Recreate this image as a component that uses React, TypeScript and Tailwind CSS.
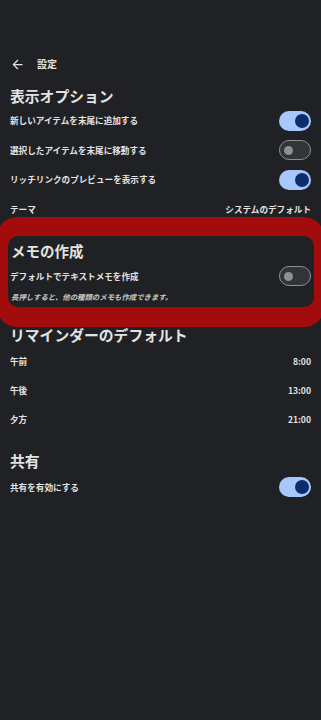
import type { ReactNode } from "react";

const font = { fontFamily: '"Noto Sans CJK JP", "Noto Sans", sans-serif' };

function Toggle({ on }: { on: boolean }) {
  if (on) {
    return (
      <div className="flex h-[20px] w-[32px] shrink-0 items-center justify-end rounded-full bg-[#a8c7fa] pr-[2.5px]">
        <div className="size-[14px] rounded-full bg-[#0b2d6b]" />
      </div>
    );
  }
  return (
    <div className="flex h-[20px] w-[32px] shrink-0 items-center rounded-full border-[1.5px] border-[#8e918f] bg-[#333437] pl-[4px]">
      <div className="size-[9px] rounded-full bg-[#8e918f]" />
    </div>
  );
}

function Row({ label, right, h = "h-[29.5px]" }: { label: string; right?: ReactNode; h?: string }) {
  return (
    <div className={`flex ${h} items-center justify-between px-[10px]`}>
      <span className="text-[8.6px] font-bold leading-none text-[#e3e3e3]">{label}</span>
      {typeof right === "string" ? (
        <span className="text-[8.6px] font-bold leading-none text-[#e3e3e3]">{right}</span>
      ) : (
        right
      )}
    </div>
  );
}

function Heading({ children, className = "" }: { children: ReactNode; className?: string }) {
  return (
    <div className={`flex h-[20px] items-center px-[10px] ${className}`}>
      <h2 className="text-[14.8px] font-bold leading-none text-[#e3e3e3]">{children}</h2>
    </div>
  );
}

export default function App() {
  return (
    <div className="min-h-[720px] w-[321px] overflow-hidden bg-[#202124] pt-[52px]" style={font}>
      <div className="flex h-[24px] items-center">
        <svg viewBox="0 0 24 24" className="ml-[9.5px] size-[15px] fill-[#e3e3e3]">
          <path d="M20 11H7.83l5.59-5.59L12 4l-8 8 8 8 1.41-1.41L7.83 13H20v-2z" />
        </svg>
        <span className="ml-[12.5px] text-[10px] font-bold leading-none text-[#e3e3e3]">設定</span>
      </div>

      <Heading className="mt-[10px]">表示オプション</Heading>
      <Row label="新しいアイテムを末尾に追加する" right={<Toggle on />} />
      <Row label="選択したアイテムを末尾に移動する" right={<Toggle on={false} />} />
      <Row label="リッチリンクのプレビューを表示する" right={<Toggle on />} />
      <Row label="テーマ" right="システムのデフォルト" />

      <div className="relative -ml-[3px] -mt-[7px] w-[327px] rounded-[20px] bg-[#a30c0c] pb-[20px] pl-[11px] pr-[10px] pt-[19px]">
        <div className="rounded-[10px] bg-[#202124] pb-[4px] pt-[5px]">
          <div className="flex h-[20px] items-center px-[3px]">
            <h2 className="text-[14.5px] font-bold leading-none text-[#e3e3e3]">メモの作成</h2>
          </div>
          <div className="mt-[5px] flex h-[20px] items-center justify-between pl-[2px] pr-[3px]">
            <span className="text-[8.6px] font-bold leading-none text-[#e3e3e3]">デフォルトでテキストメモを作成</span>
            <Toggle on={false} />
          </div>
          <div className="mt-[5px] flex h-[12px] items-center px-[3px]">
            <span className="text-[7.4px] font-bold italic leading-none text-[#c4c7c5]">
              長押しすると、他の種類のメモも作成できます。
            </span>
          </div>
        </div>
      </div>

      <div className="flex h-[16px] items-center px-[10px]">
        <h2 className="text-[14.8px] font-bold leading-none text-[#e3e3e3]">リマインダーのデフォルト</h2>
      </div>
      <div className="mt-[3.5px]">
        <Row label="午前" right="8:00" h="h-[29px]" />
        <Row label="午後" right="13:00" h="h-[29px]" />
        <Row label="夕方" right="21:00" h="h-[29px]" />
      </div>

      <Heading className="mt-[17.5px]">共有</Heading>
      <div className="mt-[1.5px]">
        <Row label="共有を有効にする" right={<Toggle on />} h="h-[29px]" />
      </div>
    </div>
  );
}
